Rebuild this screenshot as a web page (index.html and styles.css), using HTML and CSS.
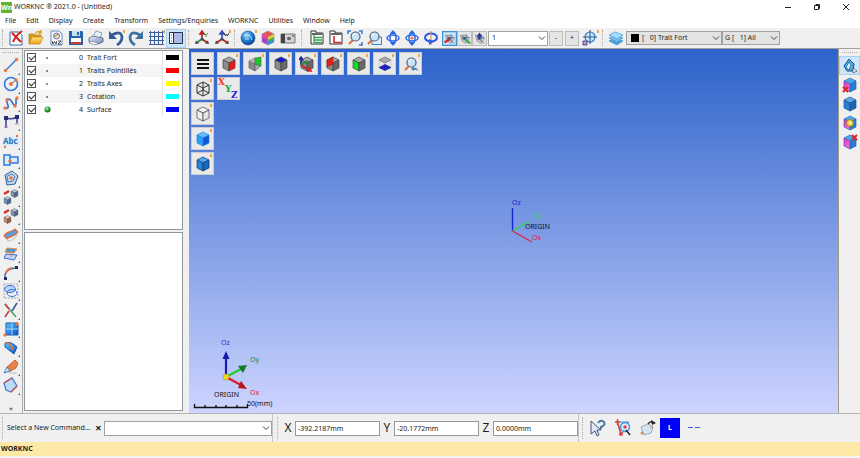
FILE: index.html
```html
<!DOCTYPE html>
<html lang="en">
<head>
<meta charset="utf-8">
<title>WORKNC ® 2021.0 - (Untitled)</title>
<meta name="viewport" content="width=device-width, initial-scale=1">
<link rel="stylesheet" href="styles.css">
</head>
<body>
<svg class="defs" aria-hidden="true">
  <defs>
    <linearGradient id="g-blue" x1="0" y1="0" x2="1" y2="1"><stop offset="0" stop-color="#5cc4ff"/><stop offset="1" stop-color="#0a4fc8"/></linearGradient>
    <linearGradient id="g-folder" x1="0" y1="0" x2="0" y2="1"><stop offset="0" stop-color="#ffe27a"/><stop offset="1" stop-color="#eda41c"/></linearGradient>
    <linearGradient id="g-steel" x1="0" y1="0" x2="1" y2="1"><stop offset="0" stop-color="#e8f0fa"/><stop offset="1" stop-color="#6f8db8"/></linearGradient>
    <linearGradient id="g-pink" x1="0" y1="0" x2="1" y2="1"><stop offset="0" stop-color="#f224c8"/><stop offset="1" stop-color="#ff7ae0"/></linearGradient>
    <radialGradient id="g-globe" cx=".4" cy=".3" r=".7"><stop offset="0" stop-color="#a8e2ff"/><stop offset=".5" stop-color="#2787d8"/><stop offset="1" stop-color="#0b3f94"/></radialGradient>
    <radialGradient id="g-ball" cx=".4" cy=".35" r=".6"><stop offset="0" stop-color="#d4ffd0"/><stop offset=".5" stop-color="#35ad3c"/><stop offset="1" stop-color="#12701c"/></radialGradient>
  </defs>
  <symbol id="chevron" viewBox="0 0 8 8"><path d="M1 2.500 4 5.500 7 2.500" fill="none" stroke="#444"/></symbol>
  <symbol id="cube" viewBox="0 0 16 16">
    <g stroke="var(--line,#444)" stroke-width=".7" stroke-linejoin="round">
      <path d="M8 1 14 4 8 7 2 4Z" fill="var(--t,#a8a8a8)"/><path d="M2 4 8 7V15L2 12Z" fill="var(--l,#8c8c8c)"/><path d="M14 4 8 7V15L14 12Z" fill="var(--r,#686868)"/>
    </g>
  </symbol>
  <symbol id="lens" viewBox="0 0 16 16"><path d="M6 10 2 14" stroke="#e0703a" stroke-width="2.200"/><circle cx="8.500" cy="6.500" r="4.500" fill="#c9e4f6" stroke="#45617c" stroke-width="1.200"/><path d="M5.800 6a3 3 0 0 1 3-2.600" stroke="#fff" fill="none"/></symbol>
  <symbol id="triad" viewBox="0 0 16 16"><path d="M8 9V2M6 4 8 1 10 4Z" fill="var(--up,#c02020)" stroke="var(--up,#c02020)" stroke-width="1.600"/><path d="M8 9 3 12.500" stroke="var(--left,#2a9a38)" stroke-width="2"/><path d="M8 9 13 12.500" stroke="var(--right,#c82020)" stroke-width="2"/><path d="M1 14 2 10.500 5 13.500ZM15 14 14 10.500 11 13.500Z" fill="#444"/><circle cx="8" cy="9" r="1.500" fill="#305080"/></symbol>
  <symbol id="new" viewBox="0 0 16 16"><path d="M2 2H11L14 5V15H2Z" fill="#fff" stroke="#3569a5"/><path d="M4 3 13 12M14 1Q8 5 5 12" fill="none" stroke="#d4201a" stroke-width="2"/></symbol>
  <symbol id="open" viewBox="0 0 16 16"><path d="M1 14V4H6L7 5H13V9" fill="#d99b1a" stroke="#a87310" stroke-width=".6"/><path d="M1 14 4 7H15L12 14Z" fill="url(#g-folder)" stroke="#b87a10" stroke-width=".6"/><path d="M7 4Q9 0 13 2M13 0V3H10" fill="none" stroke="#e0a020" stroke-width="1.300"/></symbol>
  <symbol id="wz" viewBox="0 0 16 16"><path d="M3 1H11L14 4V15H3Z" fill="#f8fbff" stroke="#5b8cc8"/><circle cx="8.500" cy="6" r="3" fill="#f4dfaa" stroke="#8a68c8"/><path d="M6 7 10 4" stroke="#38a050"/><path d="M4 11 5 14 6.500 11.500 8 14 9 11M10 11H13L10 14H13" fill="none" stroke="#222" stroke-width=".8"/></symbol>
  <symbol id="save" viewBox="0 0 16 16"><path d="M1 1H14L15 2V15H1Z" fill="#2464ae"/><path d="M4 1H12V6H4Z" fill="#c8dff5"/><path d="M3 8H13V14H3Z" fill="#fff"/><path d="M3 12H13V14H3Z" fill="#d03a30"/><path d="M9 2H11V5H9Z" fill="#2464ae"/></symbol>
  <symbol id="print" viewBox="0 0 16 16"><path d="M5 7 8 1 14 3 12 8Z" fill="#e9f4ff" stroke="#6182ae" stroke-width=".7"/><path d="M1 8 5 6 15 8V12L10 14 1 12Z" fill="url(#g-steel)" stroke="#48566e" stroke-width=".7"/><path d="M3 11 10 13 8 15 1 13Z" fill="#fff" stroke="#56657d" stroke-width=".6"/></symbol>
  <symbol id="undo" viewBox="0 0 16 16"><path d="M4 5Q13 0 14 7 14 12 9 15" fill="none" stroke="#315b99" stroke-width="2.700"/><path d="M1 1V9H9Z" fill="#315b99"/></symbol>
  <symbol id="redo" viewBox="0 0 16 16"><path d="M12 5Q3 0 2 7 2 12 7 15" fill="none" stroke="#3b71a5" stroke-width="2.700"/><path d="M15 1V9H7Z" fill="#3b71a5"/></symbol>
  <symbol id="gridicon" viewBox="0 0 16 16"><path d="M2.500 1V15M6.500 1V15M10.500 1V15M14.500 1V15M1 2.500H16M1 6.500H16M1 10.500H16M1 14.500H16" stroke="#3c5da0"/></symbol>
  <symbol id="panel" viewBox="0 0 16 16"><path d="M1.500 2.500H14.500V13.500H1.500Z" fill="#a9b9e8" stroke="#23304c"/><path d="M2 3H5V13H2Z" fill="#fff"/><path d="M5.500 3V13" stroke="#23304c"/><path d="M3 5H4M3 8H4M3 11H4" stroke="#456"/></symbol>
  <symbol id="globe" viewBox="0 0 16 16"><circle cx="8" cy="8" r="7" fill="url(#g-globe)" stroke="#174c8b" stroke-width=".6"/><path d="M4 6Q8 3 10 6T12 10M5 9H9" stroke="#b2e1ff" fill="none"/></symbol>
  <symbol id="camera" viewBox="0 0 16 16"><path d="M1 4H15V13H1Z" fill="#d0d0d0" stroke="#777"/><path d="M1 4H5V13H1Z" fill="#444"/><circle cx="9" cy="8.500" r="2.500" fill="#666" stroke="#eee"/><path d="M12 6H14" stroke="#444"/></symbol>
  <symbol id="tree" viewBox="0 0 16 16"><path d="M2 1H7V3H14V14H2Z" fill="#fff" stroke="#333"/><path d="M3 3H13V5H3Z" fill="#666"/><path d="M5 5V13M5 7.500H13M5 10H13M5 12.500H13" stroke="#37a24d" stroke-width="1.300"/></symbol>
  <symbol id="panelred" viewBox="0 0 16 16"><path d="M2 1H7V3H14V14H2Z" fill="#fff" stroke="#333"/><path d="M3 3H13V5H3Z" fill="#666"/><path d="M6 6V12.500H13" fill="none" stroke="#cf2638" stroke-width="1.600"/></symbol>
  <symbol id="orbit" viewBox="0 0 16 16"><g fill="none" stroke="#2b68e8" stroke-width="1.500"><ellipse cx="8" cy="8" rx="6" ry="3"/><ellipse cx="8" cy="8" rx="3" ry="6"/></g><path d="M8 0 11 4H5ZM8 16 5 12H11Z" fill="#2b68e8"/><circle cx="8" cy="8" r="1.500" fill="var(--mark,#fff)"/></symbol>
  <symbol id="spin" viewBox="0 0 16 16"><ellipse cx="8" cy="7.500" rx="6" ry="4" fill="none" stroke="#2b5ce8" stroke-width="2"/><path d="M8 1V15" stroke="#e9823c"/><path d="M6 9 11 11.500 6 15Z" fill="#2b5ce8"/></symbol>
  <symbol id="machine" viewBox="0 0 16 16"><path d="M3 4H11L14 8 10 14 5 11Z" fill="#c8ced6" stroke="#8a8f9c"/><path d="M6 4V10M10 3V11M5 7H14M9 10 14 14" stroke="#5f6a80"/><circle cx="8" cy="8" r="1.500" fill="#234a80"/></symbol>
  <symbol id="target" viewBox="0 0 16 16"><circle cx="8" cy="7" r="5" fill="#cfe9fc" stroke="#317dcc" stroke-width="1.200"/><path d="M8 0V14M1 7H15" stroke="#28527f"/><path d="M1 11H5V15H1Z" fill="#aaa3c4" stroke="#64458b"/></symbol>
  <symbol id="layers" viewBox="0 0 16 16"><g stroke="#3d93d4" stroke-width=".7"><path d="M1 11 7 8 15 11 9 15Z" fill="#4fa3df"/><path d="M1 8 7 5 15 8 9 12Z" fill="#79c0ef"/><path d="M1 5 7 2 15 5 9 9Z" fill="#a6ddff"/></g></symbol>
</svg>

<header class="titlebar">
  <span class="logo">Wn</span><h1>WORKNC ® 2021.0 - (Untitled)</h1>
  <div class="window-buttons">
    <button aria-label="Minimize"><svg viewBox="0 0 8 8"><path d="M1 4.500H7" stroke="#222"/></svg></button>
    <button aria-label="Restore"><svg viewBox="0 0 8 8"><path d="M1.500 2.500H5.500V6.500H1.500ZM3 2.500V1.500H6.500V5.500H5.500" fill="none" stroke="#222"/></svg></button>
    <button aria-label="Close"><svg viewBox="0 0 8 8"><path d="M1 1 7 7M7 1 1 7" stroke="#222"/></svg></button>
  </div>
</header>

<nav class="menubar">
  <button>File</button><button>Edit</button><button>Display</button><button>Create</button><button>Transform</button><button>Settings/Enquiries</button><button>WORKNC</button><button>Utilities</button><button>Window</button><button>Help</button>
</nav>

<div class="toolbar" role="toolbar" aria-label="Main">
  <div class="group">
    <button aria-label="New"><svg><use href="#new"/></svg></button>
    <button aria-label="Open"><svg><use href="#open"/></svg></button>
    <button aria-label="Workzone"><svg><use href="#wz"/></svg></button>
    <button aria-label="Save"><svg><use href="#save"/></svg></button>
    <button aria-label="Print"><svg><use href="#print"/></svg></button>
    <button class="pin" aria-label="Undo"><svg><use href="#undo"/></svg></button>
    <button aria-label="Redo"><svg><use href="#redo"/></svg></button>
    <button class="pin" aria-label="Grid"><svg><use href="#gridicon"/></svg></button>
    <button class="active" aria-label="Side panel"><svg><use href="#panel"/></svg></button>
  </div>
  <div class="group">
    <button aria-label="XY plane"><svg viewBox="0 0 16 16"><use href="#triad"/><path d="M10 3 12 5V7M14 3 12 5" stroke="#2a9a38" fill="none"/></svg></button>
    <button class="pin" aria-label="Work plane"><svg class="triad-w" viewBox="0 0 16 16"><use href="#triad"/><path d="M10 3 11.500 6 12.500 4 13.500 6 15 3" stroke="#222" fill="none" stroke-width=".8"/></svg></button>
  </div>
  <div class="group">
    <button class="pin" aria-label="Globe"><svg><use href="#globe"/></svg></button>
    <button aria-label="Colours"><svg viewBox="0 0 16 16"><g class="cube-rainbow"><use href="#cube"/></g><path d="M2 4 8 7V10L2 7Z" fill="#e8459a"/><path d="M14 4 8 7V10L14 7Z" fill="#e8c832"/><path d="M8 12V15L14 12V9Z" fill="#2c98d8"/></svg></button>
    <button aria-label="Snapshot"><svg><use href="#camera"/></svg></button>
  </div>
  <div class="group narrow">
    <button aria-label="Tree"><svg><use href="#tree"/></svg></button>
    <button aria-label="Layout"><svg><use href="#panelred"/></svg></button>
    <button aria-label="Zoom all"><svg viewBox="0 0 16 16"><use href="#lens"/><path d="M1 4V1H4M12 1H15V4M15 12V15H12" stroke="#3379d8" fill="none" stroke-width="1.500"/></svg></button>
    <button aria-label="Zoom window"><svg viewBox="0 0 16 16"><path d="M6 7H15.500V14.500H6Z" fill="#dcecff" stroke="#4382cc"/><use href="#lens"/></svg></button>
    <button aria-label="Orbit"><svg><use href="#orbit"/></svg></button>
    <button aria-label="Orbit point"><svg class="mark-orange"><use href="#orbit"/></svg></button>
    <button aria-label="Spin"><svg><use href="#spin"/></svg></button>
  </div>
  <div class="machines">
    <button class="active" aria-label="Machine X"><svg viewBox="0 0 16 16"><use href="#machine"/><path d="M2 13 8 9" stroke="#d52b25" stroke-width="3"/></svg></button>
    <button aria-label="Machine Y"><svg viewBox="0 0 16 16"><use href="#machine"/><path d="M9 9 15 14" stroke="#38b43d" stroke-width="3"/></svg></button>
    <button aria-label="Machine Z"><svg viewBox="0 0 16 16"><use href="#machine"/><path d="M8 9V4M6 5 8 2 10 5Z" stroke="#2730a4" fill="#2730a4" stroke-width="1.500"/></svg></button>
  </div>
  <div class="combo step"><select aria-label="Step"><option>1</option></select><svg><use href="#chevron"/></svg></div>
  <div class="steppers"><button>-</button><button>+</button></div>
  <button class="pin" aria-label="Target"><svg><use href="#target"/></svg></button>
  <div class="group last">
    <button aria-label="Layers"><svg><use href="#layers"/></svg></button>
    <div class="combo layer"><i class="black"></i><select aria-label="Current layer"><option>[ &nbsp; 0] Trait Fort</option></select><svg><use href="#chevron"/></svg></div>
    <div class="combo layer-group"><select aria-label="Layer group"><option>G [ &nbsp; 1] All</option></select><svg><use href="#chevron"/></svg></div>
  </div>
</div>

<main class="workspace">
  <div class="side-tools left" role="toolbar" aria-label="Geometry">
    <button aria-label="Line"><svg viewBox="0 0 16 16"><path d="M2.500 13.500 13.500 2.500" stroke="#2c6fd0" stroke-width="1.300"/><circle cx="2.500" cy="13.500" r="1.700" fill="#e9783c"/><circle cx="13.500" cy="2.500" r="1.700" fill="#e9783c"/></svg></button>
    <button aria-label="Circle"><svg viewBox="0 0 16 16"><circle cx="8" cy="8" r="6.500" fill="none" stroke="#2c7be0" stroke-width="1.600"/><path d="M8 8 13 4" stroke="#2c6fd0"/><circle cx="8" cy="8" r="2" fill="#e9783c"/><circle cx="13" cy="4" r="1.700" fill="#e9783c"/></svg></button>
    <button aria-label="Curve"><svg viewBox="0 0 16 16"><path d="M2 13C10 15 0 4 5 4S9 11 12 10 11 5 14 3" fill="none" stroke="#2c6fd0" stroke-width="1.600"/><g fill="#e9783c"><circle cx="2" cy="13" r="1.700"/><circle cx="4" cy="5" r="1.700"/><circle cx="12" cy="11" r="1.700"/><circle cx="14" cy="3" r="1.700"/></g></svg></button>
    <button aria-label="Trim"><svg viewBox="0 0 16 16"><path d="M3 14V4Q9 6 14 3V9" fill="none" stroke="#43479e" stroke-width="1.600"/><g fill="#292d76"><path d="M1 2H5V6H1ZM12 1H16V5H12Z"/></g><path d="M1 13H5M12 10H16" stroke="#bb8495"/></svg></button>
    <button aria-label="Text"><svg viewBox="0 0 16 16"><path d="M0 4H16V13H0Z" fill="#d9ebfa"/><text class="abc" x="0" y="11">Abc</text><circle cx="2" cy="14" r="1.200" fill="#e9783c"/><circle cx="14" cy="3" r="1.200" fill="#e9783c"/></svg></button>
    <button aria-label="Dimension"><svg viewBox="0 0 16 16"><path d="M1 3H7V13H1ZM7 5H15V11H7Z" fill="#dcecff" stroke="#2c7be0" stroke-width="1.500"/><circle cx="7" cy="9" r="1.800" fill="#e9783c"/></svg></button>
    <button aria-label="Polygon"><svg viewBox="0 0 16 16"><path d="M2 5 9 1 15 6 12 14 4 15Z" fill="#c6d9ed" stroke="#2c5d99"/><path d="M4 6 9 4 12 7 10 11 5 12Z" fill="none" stroke="#487bb3"/><circle cx="8" cy="8" r="1.800" fill="#e9783c"/></svg></button>
    <button aria-label="Move"><svg viewBox="0 0 16 16"><g class="cube-steel"><use href="#cube" x="7" width="9" height="9"/><use href="#cube" y="7" width="9" height="9"/></g><path d="M1 5 6 2" stroke="#d23428" stroke-width="2.500"/></svg></button>
    <button aria-label="Copy"><svg viewBox="0 0 16 16"><g class="cube-steel"><use href="#cube" x="7" width="9" height="9"/></g><g class="cube-copper"><use href="#cube" y="7" width="9" height="9"/></g><path d="M1 5 6 2" stroke="#d23428" stroke-width="2.500"/></svg></button>
    <button aria-label="Sweep"><svg viewBox="0 0 16 16"><path d="M4 14Q11 14 14 8" stroke="#bbb" fill="none"/><path d="M1 9C4 3 8 6 12 2L15 5C12 10 8 8 4 12Z" fill="#5a9bd7" stroke="#e76c40" stroke-width="1.200"/></svg></button>
    <button aria-label="Offset surface"><svg viewBox="0 0 16 16"><path d="M4 2 14 3 11 7 2 6Z" fill="#4498d8" stroke="#e88943"/><path d="M3 8 14 9 11 14 1 12Z" fill="#bdd5ff" stroke="#3f68d2"/><path d="M8 4V11" stroke="#e88943"/></svg></button>
    <button aria-label="Fillet"><svg viewBox="0 0 16 16"><path d="M2 14C1 7 5 3 14 3" stroke="#416da9" fill="none" stroke-width="1.500"/><path d="M3 8Q4 4 9 3" stroke="#e9783c" fill="none" stroke-width="2"/><path d="M1 12H4V15H1ZM12 1H15V4H12Z" fill="#222d60"/></svg></button>
    <button aria-label="Loop"><svg viewBox="0 0 16 16"><path d="M1 1H15V15H1Z" fill="none" stroke="#aaa" stroke-dasharray="2 1"/><ellipse cx="7" cy="6" rx="5.500" ry="3.500" fill="#b6d5ff" stroke="#396fd5"/><ellipse cx="9" cy="10" rx="5" ry="3.500" fill="none" stroke="#396fd5"/></svg></button>
    <button aria-label="Intersect"><svg viewBox="0 0 16 16"><path d="M2 2 13 15" stroke="#47a866" stroke-width="1.600"/><path d="M14 1 9 9" stroke="#375b9c" stroke-width="1.600"/><path d="M2 2 6 7M6 9 2 15" stroke="#c93c3c" stroke-width="1.600"/></svg></button>
    <button aria-label="Surface"><svg viewBox="0 0 16 16"><path d="M3 2H15V14H3Z" fill="url(#g-blue)" stroke="#1759a8"/><path d="M9 2V14M3 8H15" stroke="#9cdbff"/><circle cx="14" cy="3" r="1.700" fill="#e9783c"/><circle cx="2" cy="14" r="1.700" fill="#e9783c"/></svg></button>
    <button aria-label="Bend surface"><svg viewBox="0 0 16 16"><path d="M2 3Q8 1 14 7L11 14 2 7Z" fill="url(#g-blue)" stroke="#1759a8"/><path d="M2 3Q8 2 10 10" fill="none" stroke="#e9783c" stroke-width="1.500"/></svg></button>
    <button aria-label="Erase"><svg viewBox="0 0 16 16"><path d="M4 8 12 1 15 4 13 9 6 13Z" fill="#e98244" stroke="#a74e22" stroke-width=".7"/><path d="M1 14 4 8 7 12Z" fill="#cfe8ff" stroke="#497caf"/><path d="M6 14H14" stroke="#bbb"/></svg></button>
    <button aria-label="Patch"><svg viewBox="0 0 16 16"><path d="M1 6 9 1 14 9 8 15 3 13Z" fill="#b9dcfa" stroke="#497bc5" stroke-width="1.300"/><path d="M1 6 9 1M14 9 8 15" stroke="#db4c54" stroke-width="1.300"/></svg></button>
    <span class="more">»</span>
  </div>

  <aside class="panels">
    <section class="pane layers">
      <table aria-label="Layers">
        <tr><td class="check"><input type="checkbox" checked aria-label="Show Trait Fort"></td><td class="state"><i></i></td><td class="num">0</td><td>Trait Fort</td><td class="swatch"><i class="black"></i></td></tr>
        <tr><td class="check"><input type="checkbox" checked aria-label="Show Traits Pointillés"></td><td class="state"><i></i></td><td class="num">1</td><td>Traits Pointillés</td><td class="swatch"><i class="red"></i></td></tr>
        <tr><td class="check"><input type="checkbox" checked aria-label="Show Traits Axes"></td><td class="state"><i></i></td><td class="num">2</td><td>Traits Axes</td><td class="swatch"><i class="yellow"></i></td></tr>
        <tr><td class="check"><input type="checkbox" checked aria-label="Show Cotation"></td><td class="state"><i></i></td><td class="num">3</td><td>Cotation</td><td class="swatch"><i class="cyan"></i></td></tr>
        <tr><td class="check"><input type="checkbox" checked aria-label="Show Surface"></td><td class="state"><svg class="ball" viewBox="0 0 8 8"><circle cx="4" cy="4" r="3.500" fill="url(#g-ball)"/></svg></td><td class="num">4</td><td>Surface</td><td class="swatch"><i class="blue"></i></td></tr>
      </table>
    </section>
    <section class="pane"></section>
  </aside>

  <section class="viewport" aria-label="3D view">
    <div class="views">
      <button aria-label="Menu"><svg viewBox="0 0 16 16"><path d="M2 4H14M2 8H14M2 12H14" stroke="#111" stroke-width="2"/></svg></button>
      <button class="pin" aria-label="Right view"><svg class="cube-r-red"><use href="#cube"/></svg></button>
      <button class="pin" aria-label="Back view"><svg viewBox="0 0 16 16"><path d="M2 5 8 8V15L2 12Z" fill="#888" stroke="#555" stroke-width=".6"/><path d="M8 8 14 10 8 15Z" fill="#aaa" stroke="#555" stroke-width=".6"/><path d="M2 5 8 2V8Z" fill="#bbb" stroke="#666" stroke-width=".6"/><path d="M8 2 14 1V10L8 8Z" fill="#1fc52f" stroke="#35713b" stroke-width=".6"/></svg></button>
      <button class="pin" aria-label="Top view"><svg class="cube-t-blue"><use href="#cube"/></svg></button>
      <button class="pin" aria-label="Isometric view"><svg viewBox="0 0 16 16"><use href="#cube"/><path d="M2 9V2M0 4 2 1 4 4" stroke="#1d239e" fill="none" stroke-width="1.400"/><path d="M2 9 9 5" stroke="#189a2a" stroke-width="1.500"/><path d="M2 9 10 14M8 15H12L10 11" stroke="#d42028" fill="none" stroke-width="1.700"/></svg></button>
      <button class="pin" aria-label="Left view"><svg viewBox="0 0 16 16"><use href="#cube"/><path d="M2 4 8 1V8L2 11Z" fill="#e5201c" stroke="#902020" stroke-width=".6"/></svg></button>
      <button class="pin" aria-label="Front view"><svg class="cube-l-green"><use href="#cube"/></svg></button>
      <button class="pin" aria-label="Bottom view"><svg viewBox="0 0 16 16"><path d="M8 1 14 4 8 7 2 4Z" fill="#aaa" stroke="#666" stroke-width=".7"/><path d="M2 4V11M14 4V11M8 7V14" stroke="#ccc" stroke-width=".7"/><path d="M8 8.500 14 11.500 8 14.500 2 11.500Z" fill="#1c20c8" stroke="#181878" stroke-width=".7"/></svg></button>
      <button class="pin" aria-label="Previous view"><svg viewBox="0 0 16 16"><use href="#lens"/><path d="M8 13 11 9.500V12Q14 11 15 15 13 13 11 14V15Z" fill="#477db5"/></svg></button>
      <button class="pin" aria-label="Wireframe"><svg viewBox="0 0 16 16"><path d="M8 1 14 4V12L8 15 2 12V4ZM2 4 8 7 14 4M8 7V15M8 1V9M2 12 8 9 14 12" fill="none" stroke="#333"/></svg></button>
      <button aria-label="Axes"><svg class="xyz" viewBox="0 0 23 23"><text x="1" y="8" fill="#f13b2c">X</text><text x="8" y="15" fill="#18a52c">Y</text><text x="14" y="21" fill="#2522e0">Z</text></svg></button>
      <button class="pin row" aria-label="Hidden line"><svg class="cube-white"><use href="#cube"/></svg></button>
      <button class="pin row" aria-label="Shaded"><svg class="cube-soft"><use href="#cube"/></svg></button>
      <button class="pin row" aria-label="Shaded with edges"><svg class="cube-edge"><use href="#cube"/></svg></button>
    </div>

    <svg class="origin" viewBox="0 0 44 46">
      <path d="M4.500 32V9" stroke="#1724d2" stroke-width="1.400"/><path d="M4.500 32 22 22" stroke="#2ad84c" stroke-width="1.400"/><path d="M4.500 32 24 43" stroke="#e02342" stroke-width="1.400"/>
      <text x="4" y="6" fill="#1724d2">Oz</text><text x="25" y="19" fill="#35d45a">Oy</text><text x="17" y="30" fill="#111">ORIGIN</text><text x="24" y="41" fill="#e02342">Ox</text>
    </svg>

    <svg class="compass" viewBox="0 0 88 76">
      <path d="M33 40V20" stroke="#171cb0" stroke-width="2.200"/><path d="M29.500 22 33 14 36.500 22Z" fill="#171cb0"/>
      <path d="M33 40 48 32" stroke="#22cb35" stroke-width="2.500"/><path d="M45 29 54 28 50 36Z" fill="#137c22"/>
      <path d="M33 40 48 48" stroke="#dc1d22" stroke-width="2.500"/><path d="M48 44 54 52 45 51Z" fill="#b91218"/>
      <circle cx="33" cy="40" r="3" fill="#f2d624" stroke="#b69b13" stroke-width=".6"/>
      <text x="28" y="8" fill="#2730d0">Oz</text><text x="57" y="25" fill="#198a35">Oy</text><text x="57" y="58" fill="#df2030">Ox</text><text x="21" y="60" fill="#111">ORIGIN</text><text x="54" y="69" fill="#111">50(mm)</text>
      <path d="M1.500 67V70.500H54.500V67M12 68V70M23 68V70M33 68V70M44 68V70" fill="none" stroke="#111" stroke-width="1.400"/>
    </svg>
  </section>

  <div class="side-tools right" role="toolbar" aria-label="Selection">
    <button class="active" aria-label="Select shape"><svg viewBox="0 0 16 16"><path d="M2 8 7 1 12 6 11 13 5 13Z" fill="#55a9df" stroke="#124f8c"/><path d="M4 9 7 4 9 7 7 12Z" fill="#d5f0ff" stroke="#1b69a8" stroke-width=".8"/><path d="M11 10 15 13 11 15Z" fill="#fff" stroke="#555" stroke-width=".8"/></svg></button>
    <button aria-label="Remove solid"><svg viewBox="0 0 16 16"><g class="cube-pink"><use href="#cube"/></g><path d="M1 10 6 15M6 10 1 15" stroke="#d72424" stroke-width="2"/></svg></button>
    <button aria-label="Solid"><svg class="cube-solid"><use href="#cube"/></svg></button>
    <button aria-label="Solid options"><svg viewBox="0 0 16 16"><g class="cube-pink"><use href="#cube"/></g><circle cx="8" cy="8" r="3.500" fill="#f6d54b" stroke="#9c7b18"/><circle cx="8" cy="8" r="1" fill="#fff"/></svg></button>
    <button aria-label="Delete face"><svg viewBox="0 0 16 16"><g class="cube-pink"><use href="#cube"/></g><path d="M10 1 15 6M15 1 10 6" stroke="#d72424" stroke-width="2"/></svg></button>
  </div>
</main>

<footer>
  <form class="commandbar">
    <div class="group command"><label for="cmd">Select a New Command...</label><button type="button" class="clear" aria-label="Clear">×</button><div class="combo"><select id="cmd"><option></option></select><svg><use href="#chevron"/></svg></div></div>
    <div class="group coords">
      <label for="cx">X</label><input id="cx" value="-392.2187mm">
      <label for="cy">Y</label><input id="cy" value="-20.1772mm">
      <label for="cz">Z</label><input id="cz" value="0.0000mm">
    </div>
    <div class="group snap">
      <button type="button" aria-label="Help pointer"><svg viewBox="0 0 18 18"><path d="M2 2V15L6 12 8 17 10 16 8 11H12Z" fill="#dfe9f8" stroke="#405575"/><path d="M9 4Q12 0 15 3 17 6 12 8V10" fill="none" stroke="#477a9d" stroke-width="2"/></svg></button>
      <button type="button" aria-label="Snap point"><svg viewBox="0 0 18 18"><path d="M2 3H15M3 2 7 16M15 3 8 15" fill="none" stroke="#4b8ad8"/><circle cx="11" cy="8" r="4.500" fill="#d7eafa" stroke="#3a91d8" stroke-width="1.300"/><circle cx="11" cy="8" r="1.700" fill="#e4403c"/><path d="M1 3H6M3.500 0V6M3.500 3 7 15" stroke="#e4403c" stroke-width="1.500"/><circle cx="7" cy="15" r="2" fill="#e4403c"/><path d="M12 11 16 16" stroke="#222" stroke-width="1.500"/></svg></button>
      <button type="button" aria-label="Snap face"><svg viewBox="0 0 18 18"><path d="M2 8 9 5 14 8 12 14 5 16Z" fill="#d4e6f4" stroke="#7898ae" stroke-width=".8"/><path d="M9 5Q11 2 14 3" fill="none" stroke="#333" stroke-width="1.500"/><path d="M12 1 17 4 13 6Z" fill="#222"/><circle cx="3" cy="14" r="1.500" fill="#e9883c"/><path d="M14 7 11 9" stroke="#e9883c"/></svg></button>
      <button type="button" class="local">L</button>
      <svg class="dash" viewBox="0 0 14 4"><path d="M1 1.500H6M8 1.500H13" stroke="#3d5cf0"/></svg>
    </div>
  </form>
  <div class="status">WORKNC</div>
</footer>
</body>
</html>
```

FILE: styles.css
```css
* { box-sizing: border-box; }

body {
  margin: 0;
  min-height: 100vh;
  display: flex;
  flex-direction: column;
  background: #f0f0f0;
  color: #1c1c1c;
  font: 7px/12px "Noto Sans", "Open Sans", sans-serif;
}

button, input, select { margin: 0; padding: 0; font: inherit; color: inherit; }
button { border: 0; background: none; display: flex; align-items: center; justify-content: center; position: relative; }
svg { display: block; width: 16px; height: 16px; flex: none; }
.defs { position: absolute; width: 0; height: 0; }

/* Title and menus */
.titlebar { display: flex; align-items: center; height: 14px; padding-left: 1px; background: #fff; }
.titlebar h1 { margin: 0 0 0 2px; font-size: 7px; font-weight: 400; }
.logo { width: 11px; height: 11px; background: #62b32e; color: #fff; font-weight: 700; line-height: 11px; text-align: center; }
.window-buttons { margin-left: auto; display: flex; }
.window-buttons button { width: 29px; height: 14px; }
.window-buttons svg { width: 8px; height: 8px; }
.menubar { display: flex; gap: 10px; height: 14px; padding-left: 5px; background: #fff; }

/* Tool bar */
.toolbar { display: flex; align-items: center; height: 21px; border-bottom: 1px solid #a0a0a0; }
.toolbar button { width: 20px; height: 19px; }
.group { display: flex; align-items: center; }
.group::before { content: ""; width: 2px; height: 16px; margin: 0 1px 0 2px; border-left: 1px dotted #a8a8a8; }
.toolbar .narrow button { width: 19px; }
.toolbar .narrow::before { margin: 0 3px 0 3px; }
.toolbar .active, .side-tools .active { background: #cde6f9; box-shadow: inset 0 0 0 1px #a5d0f1; }
.machines { display: flex; margin: 0 1px 0 2px; }
.toolbar .machines button { width: 15px; height: 15px; border: 1px solid #bcbcbc; background: #e5e5e5; }
.toolbar .machines .active { border-color: #3d91d4; background: #cde6f9; }
.machines svg { width: 13px; height: 13px; }

.combo { position: relative; display: flex; align-items: center; height: 15px; border: 1px solid #a0a0a0; background: #fff; }
.combo select { appearance: none; width: 100%; height: 100%; border: 0; padding: 0 12px 0 3px; background: none; }
.combo svg { position: absolute; right: 1px; width: 8px; height: 8px; pointer-events: none; }
.step { width: 60px; }
.steppers { display: flex; gap: 2px; margin: 0 1px; }
.toolbar .steppers button { width: 14px; height: 15px; border: 1px solid #bcbcbc; background: #e5e5e5; }
.layer, .layer-group { height: 14px; background: #e3e3e3; }
.layer { width: 96px; padding-left: 4px; }
.layer i { width: 8px; height: 8px; flex: none; }
.layer-group { width: 58px; }
.layer-group select { padding-left: 2px; }

.pin::after { content: ""; position: absolute; top: 1px; right: 1px; width: 2px; height: 3px; background: #f3a93c; }

/* Workspace */
.workspace { flex: 1; display: flex; min-height: 0; }
.side-tools { display: flex; flex-direction: column; width: 22px; padding-top: 7px; flex: none; position: relative; }
.side-tools::before { content: ""; position: absolute; top: 3px; left: 3px; right: 3px; border-top: 1px dotted #aaa; }
.left button { flex: 1; }
.left button::after { content: ""; position: absolute; right: 2px; bottom: 0; border: 1px solid; border-color: transparent #555 #555 transparent; }
.more { height: 8px; margin-top: 10px; line-height: 8px; text-align: center; transform: rotate(90deg); }
.right { border-left: 1px solid #a39a88; }
.right button { height: 19px; }
.abc { font: 700 8px "Noto Sans", sans-serif; fill: #2774b8; }

.panels { display: flex; flex-direction: column; gap: 2px; width: 167px; padding: 1px 6px 2px 1px; border-left: 1px solid #aaa; }
.pane { flex: 1; border: 1px solid #8f959c; background: #fff; }
.pane table { width: 100%; border-collapse: collapse; }
.pane tr { height: 13px; }
.pane tr:nth-child(even) { background: #f5f5f5; }
.pane td { padding: 0; line-height: 12px; }
.check { width: 14px; }
.check input { appearance: none; display: block; width: 9px; height: 9px; margin-left: 2px; border: 1px solid #555; background: #fff; position: relative; }
.check input:checked::after { content: ""; position: absolute; left: 1px; top: 1px; width: 5px; height: 3px; border: solid #333; border-width: 0 0 1px 1px; transform: rotate(-45deg); }
.state { width: 16px; }
.state i { display: block; width: 2px; height: 2px; margin: 0 auto; border-radius: 50%; background: #666; }
.state .ball { width: 7px; height: 7px; margin: 0 auto; }
.pane .num { width: 32px; padding-right: 4px; text-align: right; }
.pane .swatch { width: 20px; border-left: 1px solid #e4e4e4; background: #fff; }
.swatch i { display: block; width: 13px; height: 5px; margin: 0 auto; }
i.black { background: #000; }
i.red { background: #f00; }
i.yellow { background: #ff0; }
i.cyan { background: #0ff; }
i.blue { background: #00f; }

/* 3D view */
.viewport { flex: 1; position: relative; overflow: hidden; background: linear-gradient(#2c62ca, #cdd4ff); }
.viewport text { font: 7px "Noto Sans", sans-serif; }
.views { display: grid; grid-template-columns: repeat(9, 23px); grid-auto-rows: 23px; gap: 2px 3px; padding: 3px 0 0 2px; }
.views button { background: #e9e9ea; border: 1px solid #c8ccd6; }
.views .row { grid-column: 1; }
.views .xyz { width: 23px; height: 23px; }
.views .xyz text { font: 700 9px "DejaVu Serif", serif; }
.origin { position: absolute; left: calc(50% - 6px); top: calc(50% - 32px); width: 44px; height: 46px; overflow: visible; }
.compass { position: absolute; left: 4px; bottom: 0; width: 88px; height: 76px; overflow: visible; }

/* Cube colours */
.cube-r-red { --r: #f01814; }
.cube-t-blue { --t: #1418dc; }
.cube-l-green { --l: #10e020; }
.cube-white { --t: #f4f4f4; --l: #eee; --r: #e4e4e4; }
.cube-soft { --t: #62bcff; --l: #26a0f5; --r: #1055d8; --line: #2586de; }
.cube-edge { --t: #48a9f2; --l: #2384de; --r: #1a68bd; --line: #16365c; }
.cube-solid { --t: #56acf0; --l: #257fd2; --r: #1b65b0; --line: #205488; }
.cube-pink { --t: #4da6ed; --l: url(#g-pink); --r: #267bd2; --line: #326cae; }
.cube-rainbow { --t: #e65549; --l: #a83dd6; --r: #38b653; --line: #a88; }
.cube-steel { --t: #b5c8e6; --l: #7594c2; --r: #49689c; }
.cube-copper { --t: #ecc8ae; --l: #cb8c69; --r: #936048; }
.triad-w { --up: #304fae; --left: #c82020; }
.mark-orange { --mark: #ee7b35; }

/* Command bar */
.commandbar { display: flex; align-items: center; height: 29px; border-top: 1px solid #b4b4b4; }
.commandbar .group::before { height: 22px; }
.command { width: 273px; height: 28px; border-right: 1px solid #c4c4c4; }
.command label { margin: 0 2px 0 1px; white-space: nowrap; }
.command .clear { width: 12px; font-size: 11px; font-weight: 700; }
.command .combo { flex: 1; }
.coords { height: 28px; border-right: 1px solid #c4c4c4; }
.commandbar .coords::before { margin-left: 4px; }
.coords label { width: 14px; text-align: center; font-size: 12px; }
.coords input { width: 85px; height: 15px; border: 1px solid #999; padding: 0 2px; background: #fff; }
.commandbar .snap::before { margin: 0 0 0 3px; }
.snap button { width: 25px; height: 20px; }
.snap svg { width: 18px; height: 18px; }
.snap .local { width: 20px; background: #0000f6; color: #fff; font-weight: 700; }
.snap .dash { width: 14px; height: 4px; margin-left: 7px; }
.status { height: 16px; padding-left: 1px; border-bottom: 2px solid #f6f6f6; background: #feeaa6; line-height: 14px; font-weight: 700; }
```
